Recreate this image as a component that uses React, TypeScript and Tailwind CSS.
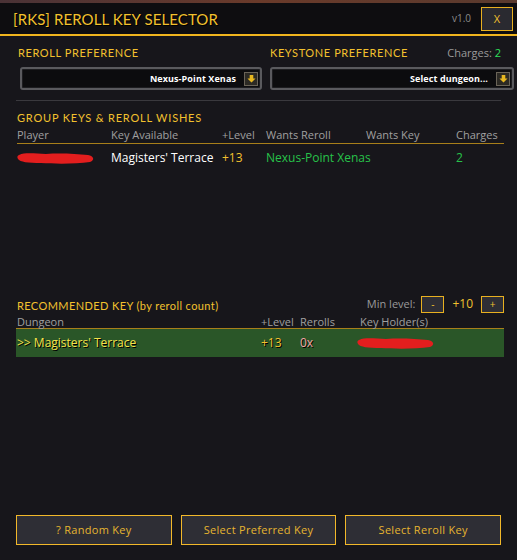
import React from "react";

const gold = "text-[#f2c12e]";

const Dropdown = ({ label, className }: { label: string; className?: string }) => {
  return (
    <div
      className={`flex items-center h-[23px] rounded-[3px] border-2 border-[#5a5a5e] bg-[#0c0c0e] shadow-[inset_0_0_0_1px_#1d1d20] ${className ?? ""}`}
    >
      <div className="flex-1 text-right pr-2 text-[9px] font-bold text-white tracking-[0.1px]">{label}</div>
      <div className="w-[14px] h-[14px] mr-[2px] flex items-center justify-center bg-[#2c2a24] border border-[#6a6458]">
        <svg width="9" height="9" viewBox="0 0 10 10">
          <path d="M3 1h4v4h2.5L5 9.5 0.5 5H3z" fill="#e8b820" />
        </svg>
      </div>
    </div>
  );
};

const Blob = ({ className }: { className?: string }) => (
  <svg width="80" height="14" viewBox="0 0 80 14" className={className}>
    <path
      d="M3 4 C10 1 20 3 30 3 C45 2 60 3 72 4 C78 5 79 9 74 11 C60 13 40 13 25 12 C12 12 4 11 2 8 C1 6 1 5 3 4z"
      fill="#e31e1e"
    />
  </svg>
);

const ActionButton = ({ label }: { label: string }) => (
  <button className="h-[30px] border border-[#f2b82a] bg-[#2e2e35] text-[11px] text-[#e6b530] tracking-[0.3px]">
    {label}
  </button>
);

export default function App() {
  return (
    <div
      className="w-[517px] h-[560px] flex flex-col bg-[#17161b] overflow-hidden"
      style={{ fontFamily: "'Open Sans', 'DejaVu Sans', sans-serif" }}
    >
      <div className="h-[3px] bg-gradient-to-r from-[#4a3236] via-[#6a3a2a] to-[#5a3a2e]" />
      {/* title bar */}
      <div className="h-[33px] bg-[#0e0d10] flex items-center pl-[13px] pr-[4px] border-b-2 border-[#f0b41e]">
        <div
          className={`flex-1 text-[15px] ${gold} tracking-[0.1px] pt-px`}
          style={{ fontFamily: "Lato, 'Open Sans', sans-serif", textShadow: "1px 1px 0 #000" }}
        >
          [RKS] REROLL KEY SELECTOR
        </div>
        <div className="text-[10px] text-[#8a8a8a] mr-[10px]">v1.0</div>
        <div className="w-[32px] h-[24px] mt-[1px] flex items-center justify-center border border-[#e8b020] bg-[#2a2a30] text-[11px] text-[#f2c12e]">
          X
        </div>
      </div>

      {/* preferences */}
      <div className="flex px-[18px] pt-[10px] gap-[8px]">
        <div className="w-[244px] flex flex-col">
          <div className={`text-[11px] ${gold} tracking-[0.6px] h-[14px] leading-[14px]`} style={{ fontFamily: "Lato, sans-serif" }}>
            REROLL PREFERENCE
          </div>
          <Dropdown label="Nexus-Point Xenas" className="mt-[7px] ml-[2px]" />
        </div>
        <div className="flex-1 flex flex-col">
          <div className="flex items-center h-[14px]">
            <div className={`flex-1 text-[11px] ${gold} tracking-[0.6px]`} style={{ fontFamily: "Lato, sans-serif" }}>
              KEYSTONE PREFERENCE
            </div>
            <div className="text-[11px] text-[#9a9a9a] mr-[-2px]">
              Charges: <span className="text-[#2ee05a]">2</span>
            </div>
          </div>
          <Dropdown label="Select dungeon..." className="mt-[7px] -mr-[15px]" />
        </div>
      </div>

      <div className="mx-[16px] mt-[10px] h-px bg-[#3a393e]" />

      {/* group keys */}
      <div className="px-[17px] mt-[10px]">
        <div className={`text-[11px] ${gold} tracking-[0.8px] leading-[14px]`} style={{ fontFamily: "Lato, sans-serif" }}>
          GROUP KEYS &amp; REROLL WISHES
        </div>
        <div className="grid grid-cols-[94px_111px_44px_100px_90px_1fr] whitespace-nowrap text-[11px] text-[#a0a0a0] mt-[4px] leading-[12px] pb-[2px] border-b border-[#a87f1a] -mr-[4px]">
          <div>Player</div>
          <div>Key Available</div>
          <div>+Level</div>
          <div>Wants Reroll</div>
          <div>Wants Key</div>
          <div>Charges</div>
        </div>
        <div className="grid grid-cols-[94px_111px_44px_100px_90px_1fr] whitespace-nowrap items-center text-[12px] mt-[5px] h-[14px]">
          <div>
            <Blob className="-ml-[1px]" />
          </div>
          <div className="text-white">Magisters' Terrace</div>
          <div className="text-[#f2c12e]">+13</div>
          <div className="text-[#27c24a]">Nexus-Point Xenas</div>
          <div />
          <div className="text-[#27c24a]">2</div>
        </div>
      </div>

      {/* recommended */}
      <div className="px-[17px] mt-[136px]">
        <div className="flex items-end">
          <div className={`flex-1 text-[11px] ${gold} leading-[14px] tracking-[0.4px]`} style={{ fontFamily: "Lato, sans-serif" }}>
            RECOMMENDED KEY (by reroll count)
          </div>
          <div className="flex items-center -mt-[6px] -mr-[4px]">
            <span className="text-[11px] text-[#9a9a9a] mr-[6px]">Min level:</span>
            <div className="w-[23px] h-[17px] flex items-center justify-center border border-[#e8b020] bg-[#2e2e35] text-[10px] text-[#f2c12e]">
              -
            </div>
            <span className="text-[12px] text-[#f2c12e] mx-[8px]">+10</span>
            <div className="w-[23px] h-[17px] flex items-center justify-center border border-[#e8b020] bg-[#2e2e35] text-[10px] text-[#f2c12e]">
              +
            </div>
          </div>
        </div>
        <div className="grid grid-cols-[244px_39px_60px_1fr] whitespace-nowrap text-[11px] text-[#a0a0a0] leading-[12px] mt-[3px] -mr-[4px] -ml-[1px] pl-[1px]">
          <div>Dungeon</div>
          <div>+Level</div>
          <div>Rerolls</div>
          <div>Key Holder(s)</div>
        </div>
        <div className="grid grid-cols-[244px_39px_56px_1fr] whitespace-nowrap items-center h-[29px] bg-[#2a5628] border-t border-[#a87f1a] text-[12px] -mr-[4px] -ml-[1px] pl-[1px]">
          <div className="text-[#f4e24a]" style={{ textShadow: "1px 1px 0 #000" }}>
            &gt;&gt; Magisters' Terrace
          </div>
          <div className="text-[#f2c12e]" style={{ textShadow: "1px 1px 0 #000" }}>
            +13
          </div>
          <div className="text-[#f0a8a8]" style={{ textShadow: "1px 1px 0 #000" }}>
            0x
          </div>
          <div>
            <Blob />
          </div>
        </div>
      </div>

      <div className="flex-1" />

      <div className="grid grid-cols-3 gap-[9px] px-[16px] mb-[15px]">
        <ActionButton label="? Random Key" />
        <ActionButton label="Select Preferred Key" />
        <ActionButton label="Select Reroll Key" />
      </div>
    </div>
  );
}
